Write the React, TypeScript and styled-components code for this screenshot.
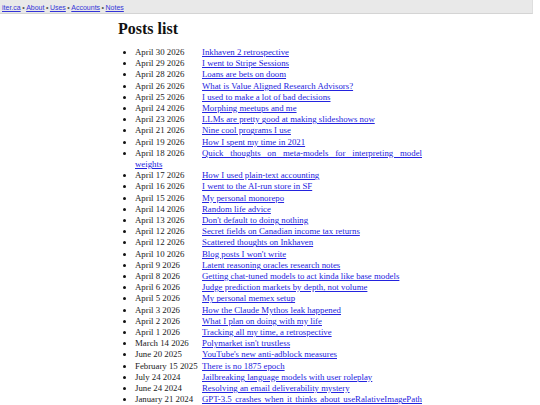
import styled, { createGlobalStyle } from "styled-components";

const GlobalStyle = createGlobalStyle`
  html, body {
    margin: 0;
    padding: 0;
    background: #fff;
  }
  body {
    font-family: "Liberation Serif", "Times New Roman", serif;
    color: #111;
  }
`

const TopBar = styled.nav`
  width: calc(100% - 7px);
  height: 14px;
  line-height: 14px;
  padding: 1px 2px 0;
  box-sizing: border-box;
  background: #e9e9e9;
  border-bottom: 1px solid #d4d4d4;
  border-right: 1px solid #dedede;
  font-family: "Liberation Sans", Arial, sans-serif;
  font-size: 7px;
  color: #555;
  white-space: nowrap;

  & a {
    color: #3434d8;
  }
`

const Dot = styled.span`
  margin: 0 1.5px;
`

const Main = styled.main`
  max-width: 304px;
  margin: 0 auto;
  font-size: 8.8px;
  line-height: 11.2px;
`

const Heading = styled.h1`
  font-size: 16px;
  line-height: 22.4px;
  font-weight: bold;
  margin: 4px 0 6.5px;
  color: #111;
`

const PostList = styled.ul`
  margin: 0;
  padding-left: 17px;
`

const Post = styled.li`
  text-align: justify;
`

const PostDate = styled.span`
  display: inline-block;
  width: 67px;
  color: #222;
`

const PostLink = styled.a`
  color: #2323de;
`

const navLinks = ["iter.ca", "About", "Uses", "Accounts", "Notes"]

const posts: [string, string][] = [
  ["April 30 2026", "Inkhaven 2 retrospective"],
  ["April 29 2026", "I went to Stripe Sessions"],
  ["April 28 2026", "Loans are bets on doom"],
  ["April 26 2026", "What is Value Aligned Research Advisors?"],
  ["April 25 2026", "I used to make a lot of bad decisions"],
  ["April 24 2026", "Morphing meetups and me"],
  ["April 23 2026", "LLMs are pretty good at making slideshows now"],
  ["April 21 2026", "Nine cool programs I use"],
  ["April 19 2026", "How I spent my time in 2021"],
  ["April 18 2026", "Quick thoughts on meta-models for interpreting model weights"],
  ["April 17 2026", "How I used plain-text accounting"],
  ["April 16 2026", "I went to the AI-run store in SF"],
  ["April 15 2026", "My personal monorepo"],
  ["April 14 2026", "Random life advice"],
  ["April 13 2026", "Don't default to doing nothing"],
  ["April 12 2026", "Secret fields on Canadian income tax returns"],
  ["April 12 2026", "Scattered thoughts on Inkhaven"],
  ["April 10 2026", "Blog posts I won't write"],
  ["April 9 2026", "Latent reasoning oracles research notes"],
  ["April 8 2026", "Getting chat-tuned models to act kinda like base models"],
  ["April 6 2026", "Judge prediction markets by depth, not volume"],
  ["April 5 2026", "My personal memex setup"],
  ["April 3 2026", "How the Claude Mythos leak happened"],
  ["April 2 2026", "What I plan on doing with my life"],
  ["April 1 2026", "Tracking all my time, a retrospective"],
  ["March 14 2026", "Polymarket isn't trustless"],
  ["June 20 2025", "YouTube's new anti-adblock measures"],
  ["February 15 2025", "There is no 1875 epoch"],
  ["July 24 2024", "Jailbreaking language models with user roleplay"],
  ["June 24 2024", "Resolving an email deliverability mystery"],
  ["January 21 2024", "GPT-3.5 crashes when it thinks about useRalativeImagePath too much"],
]

export default function App() {
  return (
    <>
      <GlobalStyle />
      <TopBar>
        {navLinks.map((name, i) => (
          <span key={name}>
            {i > 0 && <Dot>•</Dot>}
            <a href="#">{name}</a>
          </span>
        ))}
      </TopBar>
      <Main>
        <Heading>Posts list</Heading>
        <PostList>
          {posts.map(([date, title], i) => (
            <Post key={i}>
              <PostDate>{date}</PostDate>
              <PostLink href="#">{title}</PostLink>
            </Post>
          ))}
        </PostList>
      </Main>
    </>
  )
}
